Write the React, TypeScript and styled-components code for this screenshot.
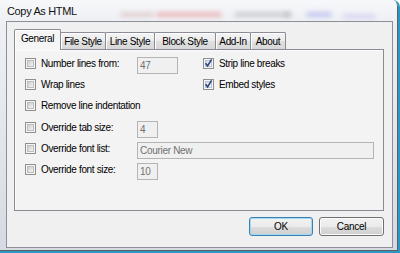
import React from "react";
import styled, { createGlobalStyle } from "styled-components";

const Global = createGlobalStyle`
  html, body { margin: 0; padding: 0; background: #ffffff; }
  body { width: 400px; height: 253px; overflow: hidden; font-family: "Liberation Sans", Arial, sans-serif; }
  * { box-sizing: border-box; }
`;

const Window = styled.div`
  width: 400px;
  height: 253px;
  display: flex;
  flex-direction: column;
  padding: 0 5px 3px 6px;
  background: linear-gradient(to bottom, #f7f8fa 0px, #eef0f4 21px, #e2e6ec 55%, #d5dae2 100%);
  border-right: 2px solid #2c98c2;
  border-bottom: 2px solid #2c98c2;
  border-top-right-radius: 7px;
  box-shadow: inset -1px -1px 0 #5a5f69;
`;

const TitleBar = styled.div`
  height: 21px;
  display: flex;
  align-items: center;
  padding-left: 1px;
  overflow: hidden;
`;

const Title = styled.span`
  font-size: 11px;
  letter-spacing: -0.35px;
  color: #111;
  width: 113px;
  flex: none;
`;

const Haze = styled.span<{ $w: number; $c: string; $ml: number; $y: number }>`
  flex: none;
  width: ${(p) => p.$w}px;
  height: 5px;
  margin-left: ${(p) => p.$ml}px;
  margin-top: ${(p) => p.$y}px;
  border-radius: 3px;
  background: ${(p) => p.$c};
  filter: blur(2.4px);
  opacity: 0.42;
`;

const Client = styled.div`
  flex: 1;
  display: flex;
  flex-direction: column;
  border: 1px solid #8b9098;
  background: #f0f0f0;
  padding: 7px 8px 0 7px;
`;

const TabStrip = styled.div`
  height: 20px;
  display: flex;
  align-items: flex-end;
`;

const Tab = styled.div<{ $w: number; $active?: boolean }>`
  position: relative;
  z-index: ${(p) => (p.$active ? 2 : 1)};
  width: ${(p) => p.$w}px;
  height: ${(p) => (p.$active ? 21 : 17)}px;
  margin-bottom: ${(p) => (p.$active ? -1 : 0)}px;
  margin-left: -1px;
  &:first-child { margin-left: 0; }
  border: 1px solid #898c95;
  border-bottom: none;
  border-radius: 2px 2px 0 0;
  background: ${(p) =>
    p.$active
      ? "#f5f5f5"
      : "linear-gradient(to bottom, #f3f3f3 0%, #ececec 50%, #e0e0e0 51%, #d8d8d8 100%)"};
  box-shadow: inset 1px 1px 0 #ffffff;
  display: flex;
  justify-content: center;
  align-items: center;
  padding-bottom: ${(p) => (p.$active ? 4 : 0)}px;
  font-size: 10px;
  letter-spacing: -0.35px;
  color: #000;
  white-space: nowrap;
`;

const Panel = styled.div`
  height: 162px;
  border: 1px solid #898c95;
  background: #f3f3f3;
  box-shadow: inset 1px 1px 0 #fbfbfb;
  padding: 7px 0 0 10px;
  display: flex;
  flex-direction: column;
  gap: 4.2px;
`;

const Row = styled.div`
  height: 17px;
  display: grid;
  grid-template-columns: 112px 66px 1fr;
  align-items: start;
`;

const Option = styled.label`
  display: flex;
  align-items: center;
  gap: 5px;
  margin-top: 1px;
  font-size: 10px;
  letter-spacing: -0.35px;
  line-height: 11px;
  color: #000;
  white-space: nowrap;
`;

const Box = styled.span`
  flex: none;
  width: 11px;
  height: 11px;
  border: 1px solid #8e8f8f;
  background: #f6f6f6;
  padding: 1px;
  display: flex;
`;

const BoxInner = styled.span<{ $checked?: boolean }>`
  flex: 1;
  border: 1px solid ${(p) => (p.$checked ? "#b9c3d6" : "#bdbdbd")};
  background: ${(p) =>
    p.$checked
      ? "linear-gradient(135deg, #d8dde6 0%, #f3f5f8 100%)"
      : "linear-gradient(135deg, #cdcdcd 0%, #f4f4f4 100%)"};
  position: relative;
`;

const Check = styled.svg`
  position: absolute;
  left: -2px;
  top: -3px;
  width: 9px;
  height: 10px;
  overflow: visible;
`;

const Field = styled.input<{ $w: number; $span?: boolean }>`
  width: ${(p) => p.$w}px;
  height: 17px;
  grid-column: ${(p) => (p.$span ? "2 / 4" : "auto")};
  border: 1px solid #b4b4b4;
  background: #f0f0f0;
  color: #707070;
  -webkit-text-fill-color: #707070;
  opacity: 1;
  font-family: "Liberation Sans", Arial, sans-serif;
  font-size: 10px;
  letter-spacing: -0.3px;
  padding: 0 2px;
  margin: 0;
  outline: none;
`;

const ButtonRow = styled.div`
  margin-top: 6px;
  display: flex;
  justify-content: flex-end;
  gap: 6px;
`;

const Button = styled.button<{ $w: number; $default?: boolean }>`
  width: ${(p) => p.$w}px;
  height: 19px;
  padding: 0;
  font-family: "Liberation Sans", Arial, sans-serif;
  font-size: 10px;
  letter-spacing: -0.3px;
  color: #000;
  border: 1px solid ${(p) => (p.$default ? "#3c7fb1" : "#707070")};
  border-radius: 3px;
  background: linear-gradient(to bottom, #f2f2f2 0%, #ebebeb 50%, #dddddd 51%, #cfcfcf 100%);
  box-shadow: inset 0 0 0 1px ${(p) => (p.$default ? "#9fd9f2" : "#fbfbfb")};
`;

function CheckBox({ checked }: { checked?: boolean }) {
  return (
    <Box>
      <BoxInner $checked={checked}>
        {checked && (
          <Check viewBox="0 0 9 10">
            <path d="M1.6 5.2 L3.6 8 L7.6 1.4" fill="none" stroke="#2a3f78" strokeWidth="1.5" />
          </Check>
        )}
      </BoxInner>
    </Box>
  );
}

function Opt({ label, checked }: { label: string; checked?: boolean }) {
  return (
    <Option>
      <CheckBox checked={checked} />
      <span>{label}</span>
    </Option>
  );
}

const tabs = [
  { label: "General", w: 47, active: true },
  { label: "File Style", w: 46 },
  { label: "Line Style", w: 50 },
  { label: "Block Style", w: 62 },
  { label: "Add-In", w: 36 },
  { label: "About", w: 36 },
];

export default function App() {
  return (
    <>
      <Global />
      <Window>
        <TitleBar>
          <Title>Copy As HTML</Title>
          <Haze $w={34} $c="#c9a0a0" $ml={0} $y={8} />
          <Haze $w={66} $c="#e06a6a" $ml={2} $y={8} />
          <Haze $w={56} $c="#9a9a9a" $ml={12} $y={8} />
          <Haze $w={8} $c="#9a9aa0" $ml={-6} $y={8} />
          <Haze $w={26} $c="#8a8ae8" $ml={14} $y={8} />
          <Haze $w={34} $c="#b8b4ee" $ml={10} $y={12} />
        </TitleBar>
        <Client>
          <TabStrip>
            {tabs.map((t) => (
              <Tab key={t.label} $w={t.w} $active={t.active}>
                {t.label}
              </Tab>
            ))}
          </TabStrip>
          <Panel>
            <Row>
              <Opt label="Number lines from:" />
              <Field $w={41} value="47" disabled readOnly />
              <Opt label="Strip line breaks" checked />
            </Row>
            <Row>
              <Opt label="Wrap lines" />
              <span />
              <Opt label="Embed styles" checked />
            </Row>
            <Row>
              <Opt label="Remove line indentation" />
            </Row>
            <Row>
              <Opt label="Override tab size:" />
              <Field $w={21} value="4" disabled readOnly />
            </Row>
            <Row>
              <Opt label="Override font list:" />
              <Field $w={237} $span value="Courier New" disabled readOnly />
            </Row>
            <Row>
              <Opt label="Override font size:" />
              <Field $w={21} value="10" disabled readOnly />
            </Row>
          </Panel>
          <ButtonRow>
            <Button $w={64} $default>OK</Button>
            <Button $w={65}>Cancel</Button>
          </ButtonRow>
        </Client>
      </Window>
    </>
  );
}
